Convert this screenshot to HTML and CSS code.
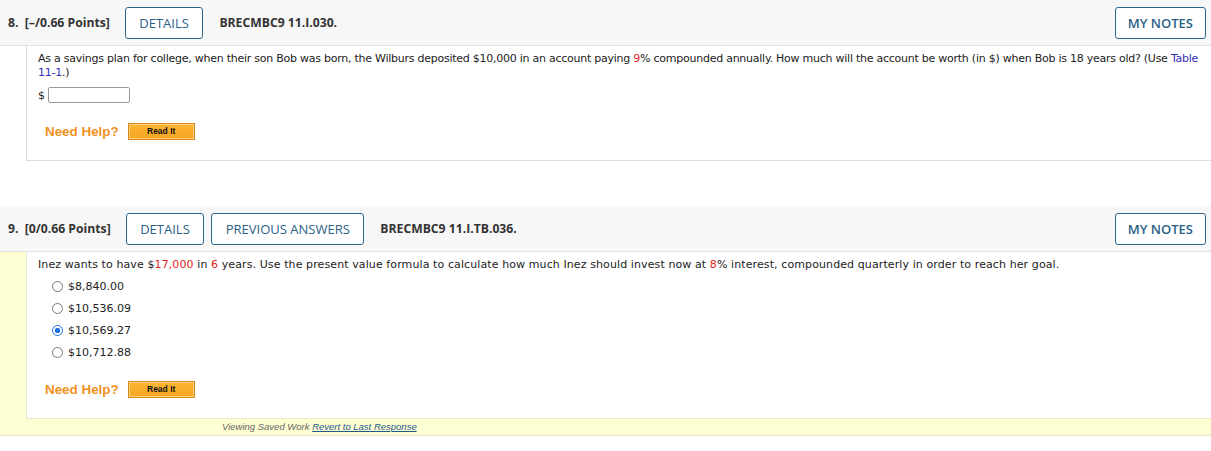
FILE: index.html
```html
<!DOCTYPE html>
<html>
<head>
<meta charset="utf-8">
<link rel="stylesheet" href="styles.css">
</head>
<body>
<div class="question">
  <div class="qhead">
    <span class="qnum">8.&nbsp; [–/0.66 Points]</span>
    <span class="btn first">DETAILS</span>
    <span class="qcode">BRECMBC9 11.I.030.</span>
    <span class="grow"></span>
    <span class="btn notes">MY NOTES</span>
  </div>
  <div class="qwrap">
    <div class="qbody">
      <p class="qtext q8text">As a savings plan for college, when their son Bob was born, the Wilburs deposited $10,000 in an account paying <span class="red">9</span>% compounded annually. How much will the account be worth (in $) when Bob is 18 years old? (Use <a class="link">Table 11-1</a>.)</p>
      <div class="answer-row">$ <span class="input"></span></div>
      <div class="help"><span class="need">Need Help?</span><span class="readit">Read It</span></div>
    </div>
  </div>
</div>

<div class="gap"></div>

<div class="question">
  <div class="qhead">
    <span class="qnum">9.&nbsp; [0/0.66 Points]</span>
    <span class="btn first">DETAILS</span>
    <span class="btn prev">PREVIOUS ANSWERS</span>
    <span class="qcode">BRECMBC9 11.I.TB.036.</span>
    <span class="grow"></span>
    <span class="btn notes">MY NOTES</span>
  </div>
  <div class="qwrap saved">
    <div class="qbody">
      <p class="qtext q9text">Inez wants to have $<span class="red">17,000</span> in <span class="red">6</span> years. Use the present value formula to calculate how much Inez should invest now at <span class="red">8</span>% interest, compounded quarterly in order to reach her goal.</p>
      <ul class="options">
        <li><span class="radio"></span>$8,840.00</li>
        <li><span class="radio"></span>$10,536.09</li>
        <li><span class="radio checked"></span>$10,569.27</li>
        <li><span class="radio"></span>$10,712.88</li>
      </ul>
      <div class="help h9"><span class="need">Need Help?</span><span class="readit">Read It</span></div>
    </div>
    <div class="savedbar">Viewing Saved Work <a class="revert">Revert to Last Response</a></div>
  </div>
</div>
</body>
</html>
```

FILE: styles.css
```css
html, body {
  margin: 0;
  padding: 0;
  background: #ffffff;
}
body {
  font-family: "DejaVu Sans", Verdana, sans-serif;
  color: #222;
}
.qhead {
  display: flex;
  align-items: center;
  height: 45px;
  background: #f7f7f7;
  border-bottom: 1px solid #e2e2e2;
  padding: 0 5px 0 8px;
  font-family: "Open Sans", sans-serif;
}
.qnum {
  font-weight: 700;
  font-size: 12.2px;
  color: #333;
}
.qcode {
  font-weight: 700;
  font-size: 12.2px;
  color: #333;
  margin-left: 16px;
}
.grow { flex: 1; }
.btn {
  display: inline-flex;
  align-items: center;
  justify-content: center;
  box-sizing: border-box;
  height: 32px;
  padding: 0 13.5px;
  border: 1px solid #2f6690;
  border-radius: 3px;
  background: #fff;
  color: #2a5f88;
  font-size: 13px;
  margin-left: 8px;
}
.btn.first { margin-left: 15px; }
.btn.notes { font-weight: 600; padding: 0 12px; }
.btn.prev { margin-left: 7px; }
.qwrap {
  padding-left: 26px;
}
.qbody {
  border-left: 1px solid #dddddd;
  border-bottom: 1px solid #dddddd;
  background: #fff;
  padding: 6px 0 0 11px;
  font-size: 11px;
}
.qtext {
  margin: 0;
  line-height: 14px;
  padding-right: 4px;
}
.q8text { letter-spacing: -0.25px; }
.q9text { letter-spacing: 0.1px; }
.red { color: #e2261d; }
.link { color: #3030b8; }
.answer-row {
  display: flex;
  align-items: center;
  margin-top: 7px;
  height: 16px;
}
.input {
  display: inline-block;
  width: 80px;
  height: 14px;
  border: 1px solid #999;
  border-radius: 2px;
  margin-left: 3px;
}
.help {
  display: flex;
  align-items: center;
  margin: 19px 0 20px 7px;
  height: 18px;
}
.need {
  font-family: "Liberation Sans", Arial, sans-serif;
  font-weight: 700;
  font-size: 13.4px;
  color: #f0911e;
  margin-right: 9px;
}
.readit {
  display: inline-flex;
  align-items: center;
  justify-content: center;
  box-sizing: border-box;
  width: 67px;
  height: 17px;
  background: linear-gradient(#fbb534, #f8a51f);
  border: 1px solid #d9861a;
  box-shadow: inset 0 0 0 1px #fdd27a;
  font-family: "Liberation Sans", Arial, sans-serif;
  font-weight: 700;
  font-size: 8.5px;
  color: #111;
}
.gap { height: 45px; }
.qwrap.saved {
  background: #ffffd4;
  border-bottom: 1px solid #e6e6cf;
}
.saved .qbody {
  border-left-color: #e8e8d0;
  border-bottom-color: #e8e8c8;
  padding-top: 6px;
}
.options {
  list-style: none;
  margin: 3px 0 0 0;
  padding: 0 0 0 14px;
}
.options li {
  display: flex;
  align-items: center;
  height: 22px;
  font-size: 11px;
}
.radio {
  display: inline-block;
  box-sizing: border-box;
  width: 11px;
  height: 11px;
  border: 1px solid #777;
  border-radius: 50%;
  margin-right: 5px;
  background: #fff;
}
.radio.checked {
  border-color: #1a73e8;
  background: radial-gradient(circle, #1a73e8 0 2.5px, #fff 3px);
}
.h9 { margin-top: 17px; margin-bottom: 20px; }
.savedbar {
  height: 16px;
  line-height: 16px;
  font-family: "Liberation Sans", Arial, sans-serif;
  font-style: italic;
  font-size: 9.5px;
  color: #666;
  padding-left: 196px;
}
.revert {
  color: #1c5a8a;
  text-decoration: underline;
}
```
